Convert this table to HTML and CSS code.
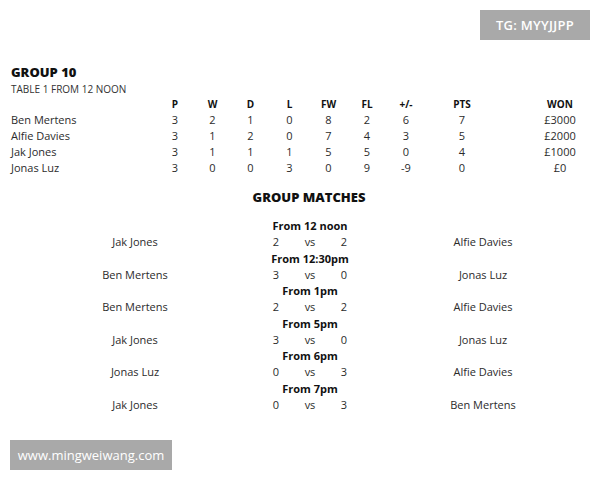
FILE: index.html
```html
<!DOCTYPE html>
<html lang="en">
<head>
<meta charset="utf-8">
<title>Group 10</title>
<link rel="stylesheet" href="styles.css">
</head>
<body>
<header class="top">
  <span class="tag">TG: MYYJJPP</span>
</header>

<section class="group">
  <h1 class="group-title">GROUP 10</h1>
  <p class="group-sub">TABLE 1 FROM 12 NOON</p>
  <div class="standings">
    <div class="cell head name"></div>
    <div class="cell head">P</div>
    <div class="cell head">W</div>
    <div class="cell head">D</div>
    <div class="cell head">L</div>
    <div class="cell head">FW</div>
    <div class="cell head">FL</div>
    <div class="cell head">+/-</div>
    <div class="cell head">PTS</div>
    <div class="cell head won">WON</div>

    <div class="cell name">Ben Mertens</div>
    <div class="cell">3</div><div class="cell">2</div><div class="cell">1</div><div class="cell">0</div>
    <div class="cell">8</div><div class="cell">2</div><div class="cell">6</div><div class="cell">7</div>
    <div class="cell won">£3000</div>

    <div class="cell name">Alfie Davies</div>
    <div class="cell">3</div><div class="cell">1</div><div class="cell">2</div><div class="cell">0</div>
    <div class="cell">7</div><div class="cell">4</div><div class="cell">3</div><div class="cell">5</div>
    <div class="cell won">£2000</div>

    <div class="cell name">Jak Jones</div>
    <div class="cell">3</div><div class="cell">1</div><div class="cell">1</div><div class="cell">1</div>
    <div class="cell">5</div><div class="cell">5</div><div class="cell">0</div><div class="cell">4</div>
    <div class="cell won">£1000</div>

    <div class="cell name">Jonas Luz</div>
    <div class="cell">3</div><div class="cell">0</div><div class="cell">0</div><div class="cell">3</div>
    <div class="cell">0</div><div class="cell">9</div><div class="cell">-9</div><div class="cell">0</div>
    <div class="cell won">£0</div>
  </div>
</section>

<section class="matches">
  <h2 class="matches-title">GROUP MATCHES</h2>
  <div class="match-grid">
    <div class="time">From 12 noon</div>
    <div class="player left">Jak Jones</div><div class="score">2</div><div class="vs">vs</div><div class="score">2</div><div class="player right">Alfie Davies</div>

    <div class="time">From 12:30pm</div>
    <div class="player left">Ben Mertens</div><div class="score">3</div><div class="vs">vs</div><div class="score">0</div><div class="player right">Jonas Luz</div>

    <div class="time">From 1pm</div>
    <div class="player left">Ben Mertens</div><div class="score">2</div><div class="vs">vs</div><div class="score">2</div><div class="player right">Alfie Davies</div>

    <div class="time">From 5pm</div>
    <div class="player left">Jak Jones</div><div class="score">3</div><div class="vs">vs</div><div class="score">0</div><div class="player right">Jonas Luz</div>

    <div class="time">From 6pm</div>
    <div class="player left">Jonas Luz</div><div class="score">0</div><div class="vs">vs</div><div class="score">3</div><div class="player right">Alfie Davies</div>

    <div class="time">From 7pm</div>
    <div class="player left">Jak Jones</div><div class="score">0</div><div class="vs">vs</div><div class="score">3</div><div class="player right">Ben Mertens</div>
  </div>
</section>

<footer class="bottom">
  <span class="site">www.mingweiwang.com</span>
</footer>
</body>
</html>
```

FILE: styles.css
```css
* { box-sizing: border-box; }

html, body {
  margin: 0;
  padding: 0;
  background: #ffffff;
}

body {
  width: 600px;
  height: 480px;
  overflow: hidden;
  font-family: "Open Sans", "Liberation Sans", sans-serif;
  color: #2b2b2b;
}

.top {
  display: flex;
  justify-content: flex-end;
  padding: 10px 10px 0 0;
}

.tag {
  display: flex;
  align-items: center;
  justify-content: center;
  width: 110px;
  height: 30px;
  background: #a9a9a9;
  color: #ffffff;
  font-size: 13px;
  font-weight: 600;
  letter-spacing: 0.3px;
}

.group {
  padding-left: 11px;
  margin-top: 24px;
}

.group-title {
  margin: 0 0 2px;
  font-size: 13px;
  line-height: 16px;
  font-weight: 800;
  color: #111111;
}

.group-sub {
  margin: 0;
  font-size: 10px;
  line-height: 14px;
  color: #333333;
}

.standings {
  display: grid;
  grid-template-columns: 145px 38px 37px 39px 39px 39px 38px 40px 72px 102px;
  font-size: 11px;
}

.cell {
  line-height: 16px;
  text-align: center;
  white-space: nowrap;
}

.cell.name {
  text-align: left;
}

.cell.won {
  padding-left: 22px;
}

.cell.head {
  font-size: 10px;
  font-weight: 700;
  color: #111111;
}

.matches {
  margin-top: 12px;
}

.matches-title {
  margin: 0;
  padding-left: 18px;
  text-align: center;
  font-size: 13px;
  line-height: 18px;
  font-weight: 800;
  color: #111111;
}

.match-grid {
  display: grid;
  grid-template-columns: 250px 32px 36px 32px 240px;
  padding-left: 10px;
  margin-top: 12px;
  font-size: 11px;
  line-height: 16.25px;
}

.time {
  grid-column: 2 / 5;
  text-align: center;
  font-weight: 700;
  color: #111111;
  white-space: nowrap;
}

.player,
.score,
.vs {
  text-align: center;
  white-space: nowrap;
}

.player.left {
  grid-column-start: 1;
}

.player.right {
  padding-left: 6px;
}

.bottom {
  padding-left: 10px;
  margin-top: 27px;
}

.site {
  display: flex;
  align-items: center;
  justify-content: center;
  width: 162px;
  height: 30px;
  background: #a9a9a9;
  color: #ffffff;
  font-size: 13px;
  font-weight: 500;
}
```
